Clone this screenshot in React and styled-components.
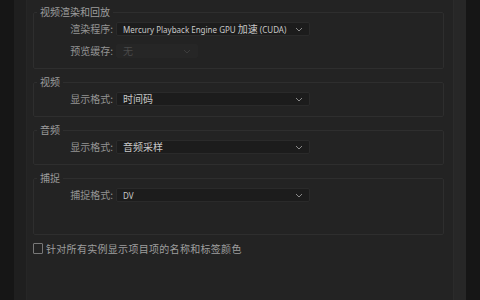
import React from "react";
import styled, { createGlobalStyle } from "styled-components";

const Global = createGlobalStyle`
    html, body, #root {
        margin: 0;
        height: 100%;
        background: #232323;
    }
    body {
        font-family: "Noto Sans", "Noto Sans CJK SC", sans-serif;
        font-size: 10px;
        overflow: hidden;
    }
`;

const Frame = styled.div`
    display: flex;
    width: 480px;
    height: 300px;
`;

const EdgeStrip = styled.div`
    width: 14px;
    flex: none;
    background: #161616;
`;

const SideColumn = styled.div`
    width: 12px;
    flex: none;
    background: #1f1f1f;
    border-right: 1px solid #262626;
`;

const Content = styled.div`
    flex: 1;
    padding: 6px 9px 0 6px;
    display: flex;
    flex-direction: column;
`;

const Track = styled.div`
    width: 12px;
    flex: none;
    background: #272727;
    border-left: 1px solid #2b2b2b;
`;

const Group = styled.fieldset`
    margin: 0 0 7px 0;
    padding: 4px 0 ${p => p.$bottom || 10}px 0;
    border: 1px solid #2e2e2e;
    border-radius: 2px;
    display: flex;
    flex-direction: column;
    gap: 8px;
    min-width: 0;
`;

const Legend = styled.legend`
    margin-left: 3px;
    padding: 0 3px;
    font-family: "Noto Sans CJK SC", sans-serif;
    font-size: 10px;
    line-height: 12px;
    color: #9c9c9c;
`;

const Row = styled.div`
    display: flex;
    align-items: center;
    height: 14px;
`;

const Label = styled.span`
    width: 79px;
    margin-right: 3px;
    text-align: right;
    font-family: "Noto Sans CJK SC", sans-serif;
    font-size: 10px;
    line-height: 14px;
    color: #939393;
    white-space: nowrap;
`;

const Select = styled.div`
    box-sizing: border-box;
    width: ${p => (p.$disabled ? 82 : 194)}px;
    height: 14px;
    display: flex;
    align-items: center;
    justify-content: space-between;
    padding: 0 6px 0 6px;
    border-radius: 2px;
    overflow: hidden;
    background: ${p => (p.$disabled ? "#262626" : "#1c1c1c")};
    border: 1px solid ${p => (p.$disabled ? "#262626" : "#2a2a2a")};
    color: ${p => (p.$disabled ? "#4a4a4a" : "#c8c8c8")};
    font-family: "Noto Sans CJK SC", sans-serif;
    font-size: 10px;
    line-height: 12px;
    white-space: nowrap;
`;

const Latin = styled.span`
    font-family: "Noto Sans", sans-serif;
    font-size: 8px;
`;

const Chevron = ({ dim }) => (
    <svg width="8" height="5" viewBox="0 0 8 5">
        <path
            d="M1 1 L4 4 L7 1"
            fill="none"
            stroke={dim ? "#3c3c3c" : "#8a8a8a"}
            strokeWidth="1"
        />
    </svg>
);

const CheckRow = styled.label`
    display: flex;
    align-items: center;
    gap: 3px;
    margin-top: -1px;
    font-family: "Noto Sans CJK SC", sans-serif;
    font-size: 10px;
    letter-spacing: 0.3px;
    color: #9e9e9e;
`;

const Box = styled.span`
    box-sizing: border-box;
    width: 10px;
    height: 11px;
    border: 1.5px solid #787878;
    border-radius: 1px;
`;

const Field = ({ label, children, disabled }) => (
    <Row>
        <Label>{label}</Label>
        <Select $disabled={disabled}>
            <span>{children}</span>
            <Chevron dim={disabled} />
        </Select>
    </Row>
);

export default function App() {
    return (
        <Frame>
            <Global />
            <EdgeStrip />
            <SideColumn />
            <Content>
                <Group>
                    <Legend>视频渲染和回放</Legend>
                    <Field label="渲染程序:">
                        <Latin>Mercury Playback Engine GPU </Latin>加速
                        <Latin> (CUDA)</Latin>
                    </Field>
                    <Field label="预览缓存:" disabled>
                        无
                    </Field>
                </Group>
                <Group>
                    <Legend>视频</Legend>
                    <Field label="显示格式:">时间码</Field>
                </Group>
                <Group>
                    <Legend>音频</Legend>
                    <Field label="显示格式:">音频采样</Field>
                </Group>
                <Group $bottom={32}>
                    <Legend>捕捉</Legend>
                    <Field label="捕捉格式:">
                        <Latin>DV</Latin>
                    </Field>
                </Group>
                <CheckRow>
                    <Box />
                    针对所有实例显示项目项的名称和标签颜色
                </CheckRow>
            </Content>
            <Track />
            <EdgeStrip />
        </Frame>
    );
}
